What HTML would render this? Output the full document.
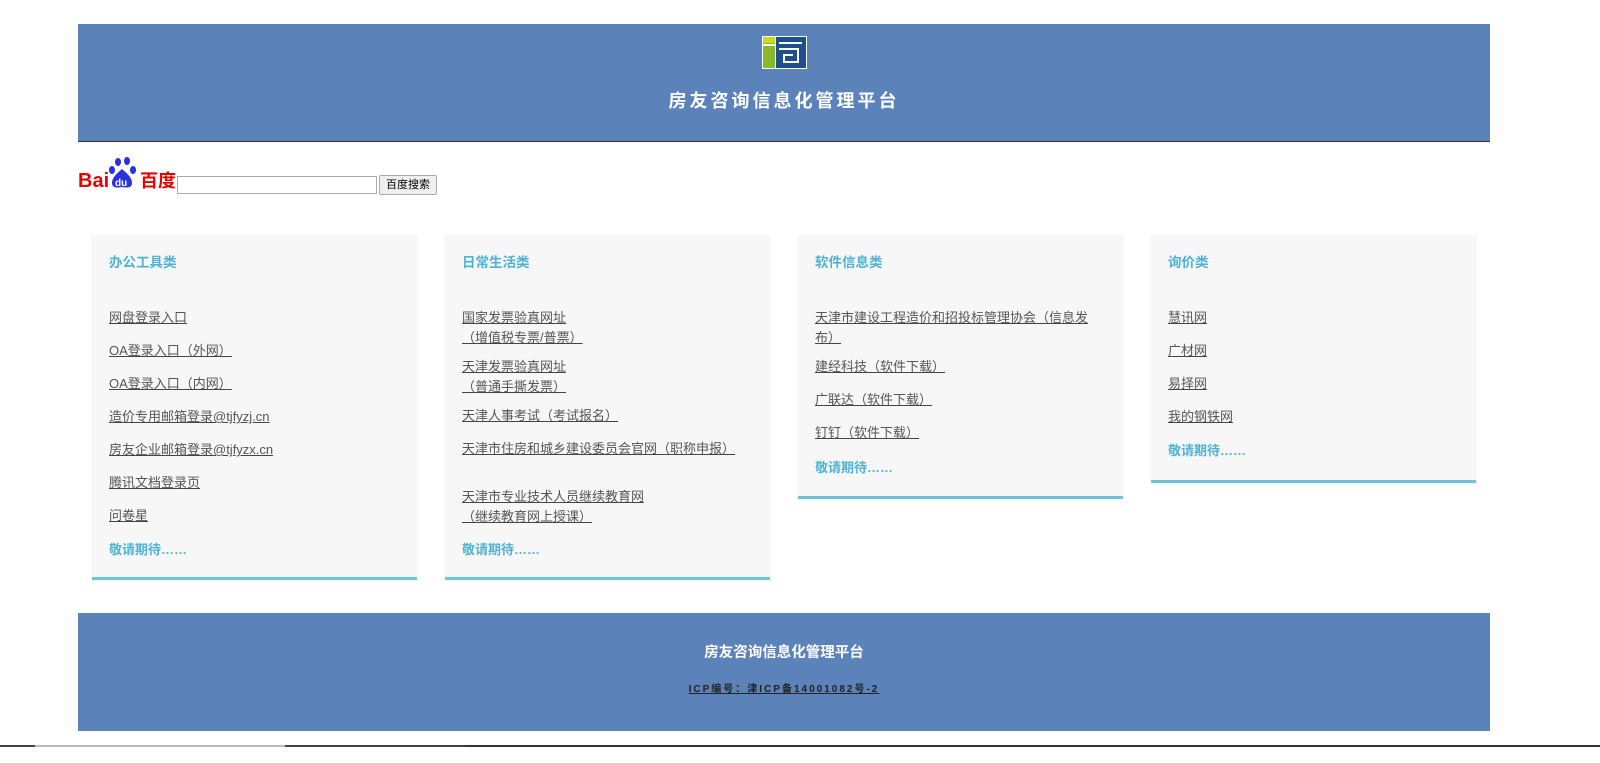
<!DOCTYPE html>
<html><head><meta charset="utf-8">
<style>
*{margin:0;padding:0;box-sizing:border-box}
body{width:1600px;height:763px;background:#fff;position:relative;overflow:hidden;font-family:"Liberation Sans","Noto Sans CJK SC",sans-serif}
.hdr{position:absolute;left:78px;top:24px;width:1412px;height:118px;background:#5b82b9;border-bottom:1px solid #333}
.t{position:absolute;left:0;width:100%;text-align:center;color:#fff;font-weight:bold}
.card{position:absolute;top:235px;width:325px;background:#f7f7f7;border-bottom:3px solid #6cc6d8;box-shadow:0 1px 2px rgba(0,0,0,.08)}
.card div{position:absolute;left:17px;white-space:nowrap;font-size:13px;line-height:20px}
.h{color:#4fb3d6;font-weight:bold;font-size:13.5px!important}
.a{color:#555;text-decoration:underline;text-decoration-color:#444}
.m{color:#4fb3d6;font-weight:bold}
.ftr{position:absolute;left:78px;top:613px;width:1412px;height:118px;background:#5b82b9}
</style></head><body>
<div class="hdr">
<svg style="position:absolute;left:684px;top:12px" width="45" height="33" viewBox="0 0 45 33">
<rect width="45" height="33" fill="#fff"/>
<rect x="1" y="1" width="12" height="31" fill="#8ab82a"/>
<rect x="1" y="1" width="12" height="6" fill="#c8dc1e"/>
<rect x="1" y="8" width="12" height="2" fill="#fff"/>
<rect x="14" y="1" width="30" height="31" fill="#1f4e8c"/>
<path d="M17 7H40M17 13H36V26H22V19H31" stroke="#fff" stroke-width="2" fill="none"/>
</svg>
<div class="t" style="top:63px;font-size:18px;letter-spacing:3px">房友咨询信息化管理平台</div>
</div>
<div style="position:absolute;left:78px;top:157px;width:98px;height:34px">
<svg width="98" height="34" viewBox="0 0 98 34">
<text x="0" y="30" font-family="Liberation Sans" font-weight="bold" font-size="20" fill="#e10602">Bai</text>
<ellipse cx="40" cy="5" rx="3" ry="4" fill="#2932e1"/><ellipse cx="49" cy="4" rx="3" ry="4" fill="#2932e1"/>
<ellipse cx="34" cy="13" rx="3" ry="4" fill="#2932e1"/><ellipse cx="55" cy="13" rx="3" ry="4" fill="#2932e1"/>
<path d="M44 12C38 17 34 21 34 26C34 31 39 31 44 30C49 31 54 31 54 26C54 21 50 17 44 12Z" fill="#2932e1"/>
<text x="37" y="29" font-family="Liberation Sans" font-size="10" font-weight="bold" fill="#fff">du</text>
<text x="62" y="30" font-family="Noto Sans CJK SC" font-weight="bold" font-size="18" fill="#e10602">百度</text>
</svg></div>
<div style="position:absolute;left:177px;top:176px;width:200px;height:18px;border:1px solid #aaa;background:#fff"></div>
<div style="position:absolute;left:379px;top:175px;width:58px;height:20px;border:1px solid #aaa;background:#efefef;border-radius:2px;font-size:11px;line-height:18px;text-align:center;color:#000">百度搜索</div>

<div class="card" style="left:92px;height:345px">
<div class="h" style="top:18px">办公工具类</div>
<div class="a" style="top:73px">网盘登录入口</div>
<div class="a" style="top:106px">OA登录入口（外网）</div>
<div class="a" style="top:139px">OA登录入口（内网）</div>
<div class="a" style="top:172px">造价专用邮箱登录@tjfyzj.cn</div>
<div class="a" style="top:205px">房友企业邮箱登录@tjfyzx.cn</div>
<div class="a" style="top:238px">腾讯文档登录页</div>
<div class="a" style="top:271px">问卷星</div>
<div class="m" style="top:305px">敬请期待……</div>
</div>
<div class="card" style="left:445px;height:345px">
<div class="h" style="top:18px">日常生活类</div>
<div class="a" style="top:73px">国家发票验真网址<br>（增值税专票/普票）</div>
<div class="a" style="top:122px">天津发票验真网址<br>（普通手撕发票）</div>
<div class="a" style="top:171px">天津人事考试（考试报名）</div>
<div class="a" style="top:204px">天津市住房和城乡建设委员会官网（职称申报）</div>
<div class="a" style="top:252px">天津市专业技术人员继续教育网<br>（继续教育网上授课）</div>
<div class="m" style="top:305px">敬请期待……</div>
</div>
<div class="card" style="left:798px;height:264px">
<div class="h" style="top:18px">软件信息类</div>
<div class="a" style="top:73px">天津市建设工程造价和招投标管理协会（信息发<br>布）</div>
<div class="a" style="top:122px">建经科技（软件下载）</div>
<div class="a" style="top:155px">广联达（软件下载）</div>
<div class="a" style="top:188px">钉钉（软件下载）</div>
<div class="m" style="top:223px">敬请期待……</div>
</div>
<div class="card" style="left:1151px;height:248px">
<div class="h" style="top:18px">询价类</div>
<div class="a" style="top:73px">慧讯网</div>
<div class="a" style="top:106px">广材网</div>
<div class="a" style="top:139px">易择网</div>
<div class="a" style="top:172px">我的钢铁网</div>
<div class="m" style="top:206px">敬请期待……</div>
</div>

<div class="ftr">
<div class="t" style="top:28px;font-size:14.5px">房友咨询信息化管理平台</div>
<div class="t" style="top:67px;font-size:10px;letter-spacing:2px;color:#222;text-decoration:underline">ICP编号：津ICP备14001082号-2</div>
</div>
<div style="position:absolute;left:0;top:745px;width:1600px;height:2px;background:#444"></div>
<div style="position:absolute;left:35px;top:745px;width:250px;height:2px;background:#bbb"></div>
<div style="position:absolute;left:465px;top:745px;width:1140px;height:2px;background:#333"></div>
</body></html>
